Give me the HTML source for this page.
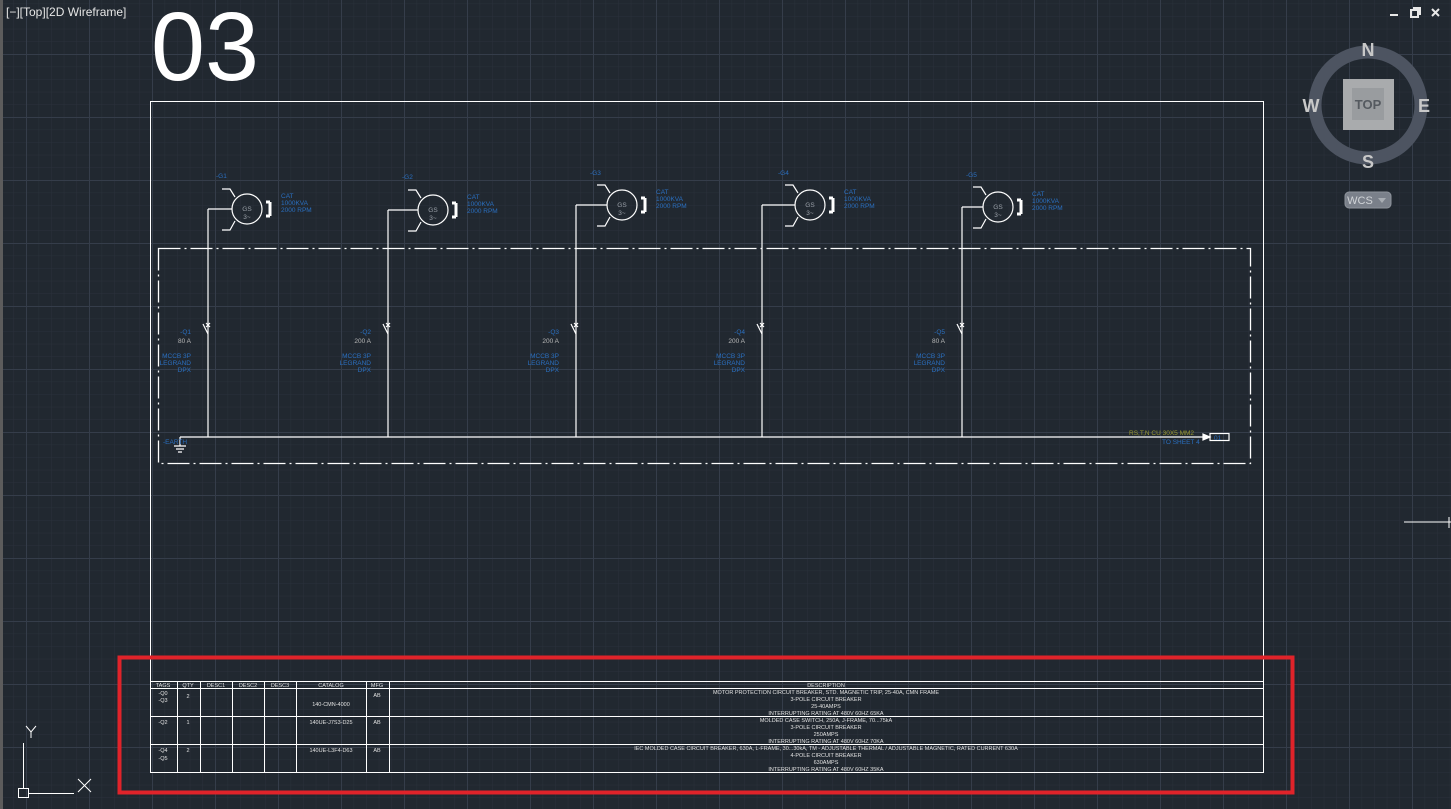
<!DOCTYPE html>
<html><head><style>
html,body{margin:0;padding:0;background:#212830;width:1451px;height:809px;overflow:hidden}
svg{display:block}
text{font-family:"Liberation Sans",sans-serif}
</style></head><body>
<svg width="1451" height="809" xmlns="http://www.w3.org/2000/svg">
<defs>
<pattern id="minor" x="26" y="54" width="12.6" height="12.6" patternUnits="userSpaceOnUse">
<path d="M0 0H12.6M0 0V12.6" stroke="#2a313b" stroke-width="1" fill="none"/>
</pattern>
<pattern id="major" x="26" y="54" width="63" height="63" patternUnits="userSpaceOnUse">
<path d="M0 0.5H63M0.5 0V63" stroke="#353d4a" stroke-width="1" fill="none"/>
</pattern>
</defs>
<rect width="1451" height="809" fill="#212830"/>
<rect width="1451" height="809" fill="url(#minor)"/>
<rect width="1451" height="809" fill="url(#major)"/>
<rect x="0" y="0" width="3" height="809" fill="#5c5c5c"/>

<text x="6" y="16" font-size="12" fill="#e6e6e6">[−][Top][2D Wireframe]</text>
<text x="151" y="80" font-size="97" fill="#ffffff">03</text>

<g stroke="#e8e8e8" stroke-width="2" fill="none">
<path d="M1390 15H1398"/>
<rect x="1411" y="10" width="7" height="7"/><path d="M1413 8H1420V15"/>
<path d="M1432 9L1439 16M1439 9L1432 16"/>
</g>

<circle cx="1368" cy="105" r="53" fill="none" stroke="#4d5461" stroke-width="13"/>
<rect x="1343" y="79" width="51" height="51" fill="#a9abad"/>
<rect x="1352" y="88" width="32" height="32" fill="#999c9f"/>
<text x="1368" y="109" font-size="13" font-weight="bold" fill="#555a60" text-anchor="middle">TOP</text>
<g font-size="18" font-weight="bold" fill="#c8c8c8" text-anchor="middle">
<text x="1368" y="56">N</text><text x="1368" y="168">S</text>
<text x="1311" y="112">W</text><text x="1424" y="112">E</text>
</g>
<rect x="1345" y="192" width="46" height="16" rx="4" fill="#7a808a" stroke="#8e949c"/>
<text x="1360" y="204" font-size="11" fill="#d0d3d7" text-anchor="middle">WCS</text>
<path d="M1378 198L1386 198L1382 203Z" fill="#a8adb3"/>

<path d="M1404 522H1451M1449 517V528" stroke="#fff" stroke-width="1"/>

<rect x="150.5" y="101.5" width="1113" height="671" fill="none" stroke="#fff" stroke-width="1"/>
<rect x="158.5" y="248.5" width="1092" height="215" fill="none" stroke="#fff" stroke-width="1.3" stroke-dasharray="22 4 2 4"/>

<g stroke="#fff" stroke-width="1.2" fill="none">
<g>
<circle cx="247" cy="209" r="15"/><path d="M208 209H232M208 209V437M222 189H230L235 197M222 230H230L235 221"/><path d="M270 202V216M266 202H270M266 216H270" stroke-width="3"/>
</g>
<g transform="translate(186,1)">
<circle cx="247" cy="209" r="15"/><path d="M202 209H232M202 209V436M222 189H230L235 197M222 230H230L235 221"/><path d="M270 202V216M266 202H270M266 216H270" stroke-width="3"/>
</g>
<g transform="translate(375,-4)">
<circle cx="247" cy="209" r="15"/><path d="M201 209H232M201 209V441M222 189H230L235 197M222 230H230L235 221"/><path d="M270 202V216M266 202H270M266 216H270" stroke-width="3"/>
</g>
<g transform="translate(563,-4)">
<circle cx="247" cy="209" r="15"/><path d="M199 209H232M199 209V441M222 189H230L235 197M222 230H230L235 221"/><path d="M270 202V216M266 202H270M266 216H270" stroke-width="3"/>
</g>
<g transform="translate(751,-2)">
<circle cx="247" cy="209" r="15"/><path d="M211 209H232M211 209V439M222 189H230L235 197M222 230H230L235 221"/><path d="M270 202V216M266 202H270M266 216H270" stroke-width="3"/>
</g>
<path d="M203 324L208 334M206 323L210 327M210 323L206 327"/>
<path d="M383 324L388 334M386 323L390 327M390 323L386 327"/>
<path d="M571 324L576 334M574 323L578 327M578 323L574 327"/>
<path d="M757 324L762 334M760 323L764 327M764 323L760 327"/>
<path d="M957 324L962 334M960 323L964 327M964 323L960 327"/>
<path d="M180 437H1205M180 437V446M174 446H186M176 449H184M178 452H182"/>
<path d="M1203 434L1210 437L1203 440Z" fill="#fff"/>
<rect x="1210" y="433.5" width="19" height="7"/>
</g>
<g font-size="6.5" fill="#9aa0a8" text-anchor="middle">
<text x="247" y="211">GS</text><text x="247" y="219">3~</text>
<text x="433" y="212">GS</text><text x="433" y="220">3~</text>
<text x="622" y="207">GS</text><text x="622" y="215">3~</text>
<text x="810" y="207">GS</text><text x="810" y="215">3~</text>
<text x="998" y="209">GS</text><text x="998" y="217">3~</text>
</g>
<g font-size="6.5" fill="#2a6fc0">
<text x="216" y="178">-G1</text><text x="402" y="179">-G2</text><text x="590" y="175">-G3</text><text x="778" y="175">-G4</text><text x="966" y="177">-G5</text>
<g><text x="281" y="198">CAT</text><text x="281" y="205">1000KVA</text><text x="281" y="212">2000 RPM</text></g>
<g transform="translate(186,1)"><text x="281" y="198">CAT</text><text x="281" y="205">1000KVA</text><text x="281" y="212">2000 RPM</text></g>
<g transform="translate(375,-4)"><text x="281" y="198">CAT</text><text x="281" y="205">1000KVA</text><text x="281" y="212">2000 RPM</text></g>
<g transform="translate(563,-4)"><text x="281" y="198">CAT</text><text x="281" y="205">1000KVA</text><text x="281" y="212">2000 RPM</text></g>
<g transform="translate(751,-2)"><text x="281" y="198">CAT</text><text x="281" y="205">1000KVA</text><text x="281" y="212">2000 RPM</text></g>
<text x="163" y="444">-EARTH</text>
<text x="1162" y="444">TO SHEET 4</text>
<text x="1214" y="440" fill="#2a6fc0">01</text>
</g>
<text x="1129" y="435" font-size="6.5" fill="#9a9a30">RS,T,N CU 30X5 MM2</text>
<g font-size="6.5" text-anchor="end">
<g><text x="191" y="334" fill="#2a6fc0">-Q1</text><text x="191" y="343" fill="#b8b8b8">80 A</text><text x="191" y="358" fill="#2a6fc0">MCCB 3P</text><text x="191" y="365" fill="#2a6fc0">LEGRAND</text><text x="191" y="372" fill="#2a6fc0">DPX</text></g>
<g transform="translate(180,0)"><text x="191" y="334" fill="#2a6fc0">-Q2</text><text x="191" y="343" fill="#b8b8b8">200 A</text><text x="191" y="358" fill="#2a6fc0">MCCB 3P</text><text x="191" y="365" fill="#2a6fc0">LEGRAND</text><text x="191" y="372" fill="#2a6fc0">DPX</text></g>
<g transform="translate(368,0)"><text x="191" y="334" fill="#2a6fc0">-Q3</text><text x="191" y="343" fill="#b8b8b8">200 A</text><text x="191" y="358" fill="#2a6fc0">MCCB 3P</text><text x="191" y="365" fill="#2a6fc0">LEGRAND</text><text x="191" y="372" fill="#2a6fc0">DPX</text></g>
<g transform="translate(554,0)"><text x="191" y="334" fill="#2a6fc0">-Q4</text><text x="191" y="343" fill="#b8b8b8">200 A</text><text x="191" y="358" fill="#2a6fc0">MCCB 3P</text><text x="191" y="365" fill="#2a6fc0">LEGRAND</text><text x="191" y="372" fill="#2a6fc0">DPX</text></g>
<g transform="translate(754,0)"><text x="191" y="334" fill="#2a6fc0">-Q5</text><text x="191" y="343" fill="#b8b8b8">80 A</text><text x="191" y="358" fill="#2a6fc0">MCCB 3P</text><text x="191" y="365" fill="#2a6fc0">LEGRAND</text><text x="191" y="372" fill="#2a6fc0">DPX</text></g>
</g>

<g stroke="#fff" stroke-width="1" fill="none">
<path d="M150 681.5H1263M150 688.5H1263M150 716.5H1263M150 744.5H1263M150 772.5H1263"/>
<path d="M150.5 681V772M177.5 681V772M200.5 681V772M232.5 681V772M264.5 681V772M296.5 681V772M366.5 681V772M389.5 681V772M1263.5 681V772"/>
</g>
<g font-size="5.5" fill="#e0e0e0" text-anchor="middle">
<text x="163" y="687">TAGS</text><text x="188" y="687">QTY</text><text x="216" y="687">DESC1</text><text x="248" y="687">DESC2</text><text x="280" y="687">DESC3</text><text x="331" y="687">CATALOG</text><text x="377" y="687">MFG</text><text x="826" y="687">DESCRIPTION</text>
<text x="163" y="695">-Q0</text><text x="163" y="702">-Q3</text><text x="188" y="698">2</text><text x="331" y="706">140-CMN-4000</text><text x="377" y="697">AB</text>
<text x="163" y="724">-Q2</text><text x="188" y="724">1</text><text x="331" y="724">140UE-J7S3-D25</text><text x="377" y="724">AB</text>
<text x="163" y="752">-Q4</text><text x="163" y="760">-Q5</text><text x="188" y="752">2</text><text x="331" y="752">140UE-L3F4-D63</text><text x="377" y="752">AB</text>
<text x="826" y="694">MOTOR PROTECTION CIRCUIT BREAKER, STD. MAGNETIC TRIP, 25-40A, CMN FRAME</text>
<text x="826" y="701">3-POLE CIRCUIT BREAKER</text><text x="826" y="708">25-40AMPS</text><text x="826" y="715">INTERRUPTING RATING AT 480V 60HZ 65KA</text>
<text x="826" y="722">MOLDED CASE SWITCH, 250A, J-FRAME, 70...75kA</text>
<text x="826" y="729">3-POLE CIRCUIT BREAKER</text><text x="826" y="736">250AMPS</text><text x="826" y="743">INTERRUPTING RATING AT 480V 60HZ 70KA</text>
<text x="826" y="750">IEC MOLDED CASE CIRCUIT BREAKER, 630A, L-FRAME, 30...30kA, TM - ADJUSTABLE THERMAL / ADJUSTABLE MAGNETIC, RATED CURRENT 630A</text>
<text x="826" y="757">4-POLE CIRCUIT BREAKER</text><text x="826" y="764">630AMPS</text><text x="826" y="771">INTERRUPTING RATING AT 480V 60HZ 35KA</text>
</g>
<rect x="119.5" y="657.5" width="1173" height="135" fill="none" stroke="#e0232a" stroke-width="4"/>

<g stroke="#fff" stroke-width="1" fill="none">
<path d="M23.5 743V789M29 793.5H74"/>
<rect x="18.5" y="788.5" width="10" height="9"/>
<path d="M78 779L91 792M91 779L78 792M26 726L31 732L36 726M31 732V738"/>
</g>
</svg>
</body></html>
